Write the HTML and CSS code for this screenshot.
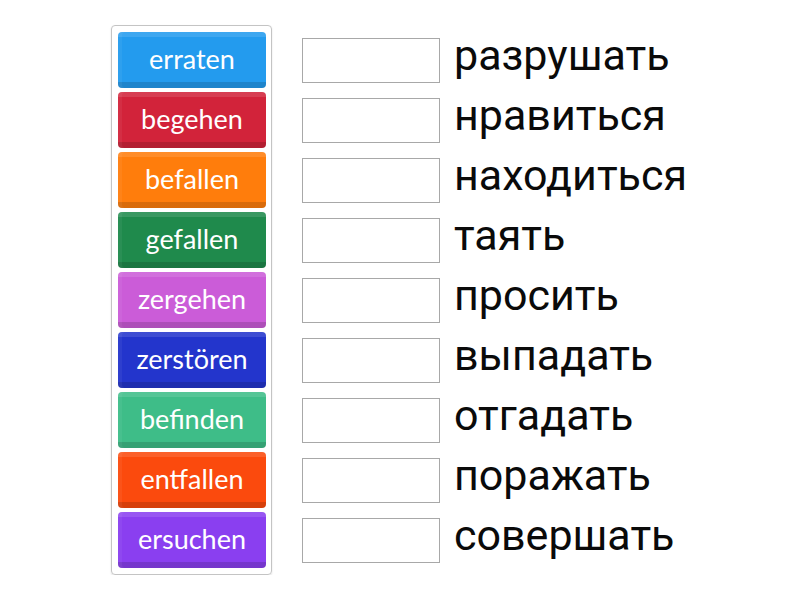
FILE: index.html
```html
<!DOCTYPE html>
<html>
<head>
<meta charset="utf-8">
<link rel="stylesheet" href="styles.css">
</head>
<body>
<div class="page">
  <div class="bank">
    <div class="tile blue">erraten</div>
    <div class="tile red">begehen</div>
    <div class="tile orange">befallen</div>
    <div class="tile green">gefallen</div>
    <div class="tile violet">zergehen</div>
    <div class="tile navy">zerstören</div>
    <div class="tile teal">befinden</div>
    <div class="tile fire">entfallen</div>
    <div class="tile purple">ersuchen</div>
  </div>
  <div class="targets">
    <div class="row"><div class="slot"></div><span class="word">разрушать</span></div>
    <div class="row"><div class="slot"></div><span class="word">нравиться</span></div>
    <div class="row"><div class="slot"></div><span class="word">находиться</span></div>
    <div class="row"><div class="slot"></div><span class="word">таять</span></div>
    <div class="row"><div class="slot"></div><span class="word">просить</span></div>
    <div class="row"><div class="slot"></div><span class="word">выпадать</span></div>
    <div class="row"><div class="slot"></div><span class="word">отгадать</span></div>
    <div class="row"><div class="slot"></div><span class="word">поражать</span></div>
    <div class="row"><div class="slot"></div><span class="word">совершать</span></div>
  </div>
</div>
</body>
</html>
```
FILE: styles.css
```css
html, body {
  margin: 0;
  padding: 0;
  background: #fff;
}
.page {
  display: flex;
  align-items: flex-start;
  padding: 25px 0 0 111px;
}
.bank {
  border: 1px solid #c4c4c4;
  border-radius: 4px;
  padding: 6px 5px 6px 6px;
  display: flex;
  flex-direction: column;
  gap: 4px;
  box-shadow: 0 1px 2px rgba(0,0,0,0.12);
}
.tile {
  width: 148px;
  height: 56px;
  border-radius: 4px;
  display: flex;
  align-items: center;
  justify-content: center;
  font-family: Lato, "Open Sans", sans-serif;
  font-size: 27px;
  color: #fff;
  box-sizing: border-box;
  padding-bottom: 4px;
  background-image: linear-gradient(to bottom, rgba(255,255,255,0.12) 0, rgba(255,255,255,0.12) 5px, rgba(255,255,255,0) 5px, rgba(0,0,0,0) 50px, rgba(0,0,0,0.15) 50px);
  box-shadow: inset 4px 0 0 rgba(255,255,255,0.05);
}
.blue { background-color: #239bee; }
.red { background-color: #d2233a; }
.orange { background-color: #ff7d0c; }
.green { background-color: #1f8a4c; }
.violet { background-color: #cb5cd8; }
.navy { background-color: #2335cc; }
.teal { background-color: #3ebd88; }
.fire { background-color: #fb4a0d; }
.purple { background-color: #8a3ff0; }
.targets {
  display: flex;
  flex-direction: column;
  gap: 4px;
  margin-left: 30px;
  margin-top: 7px;
}
.row {
  height: 56px;
  display: flex;
  align-items: center;
}
.slot {
  width: 138px;
  height: 45px;
  box-sizing: border-box;
  border: 1px solid #a8a8a8;
  background: #fff;
}
.word {
  margin-left: 14px;
  font-family: Roboto, sans-serif;
  font-size: 43px;
  color: #0a0a0a;
  line-height: 1;
  padding-bottom: 9px;
}
```
